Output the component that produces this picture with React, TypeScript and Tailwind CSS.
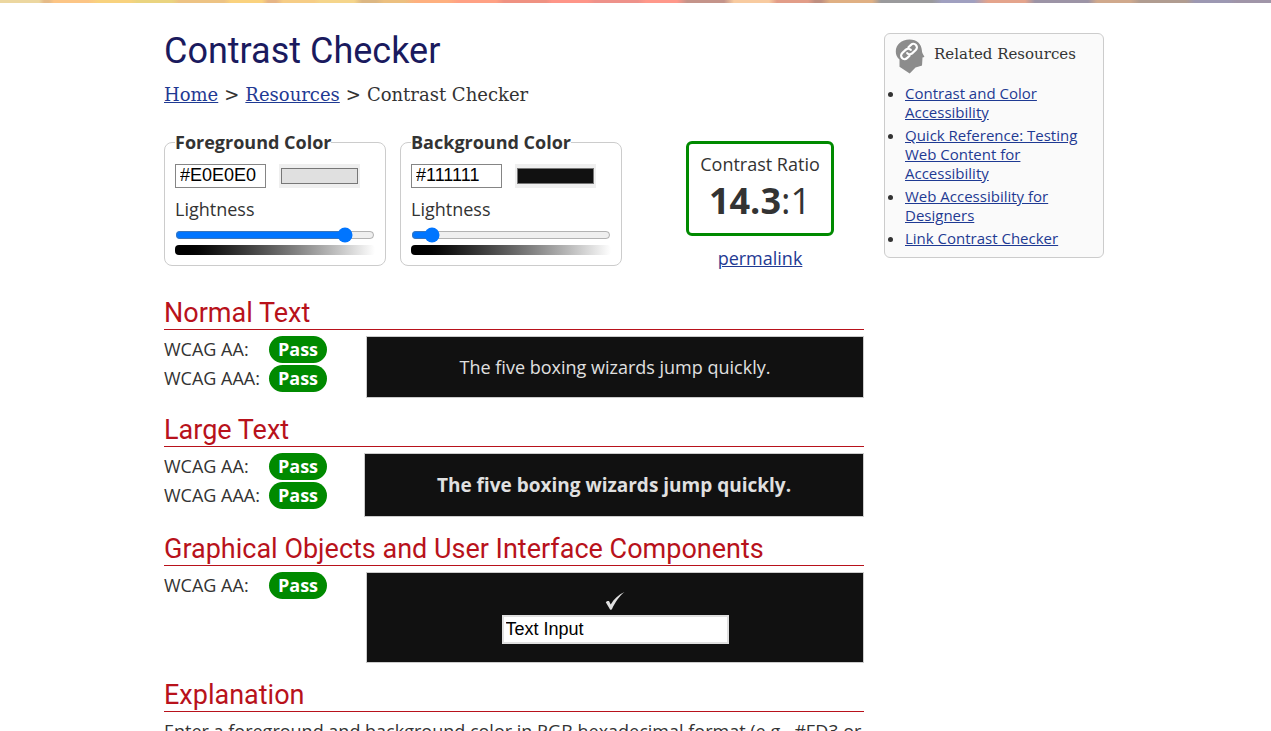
import { useState, type ReactNode } from 'react';

/* Colour stops of the decorative strip: start, end, colour (of 1271 units). */
const strip: [number, number, string][] = [
  [0, 39, '#ecd7a0'],
  [44, 49, '#e5bb88'],
  [54, 88, '#fcc585'],
  [98, 130, '#f8d27e'],
  [137, 172, '#ead480'],
  [179, 224, '#edc384'],
  [231, 262, '#fad27e'],
  [268, 276, '#e6b586'],
  [283, 314, '#f6cd86'],
  [320, 354, '#f5d58b'],
  [362, 376, '#dcb783'],
  [384, 404, '#ecc080'],
  [416, 448, '#feb07f'],
  [458, 496, '#ffa184'],
  [504, 546, '#ef9282'],
  [552, 588, '#fe9588'],
  [595, 638, '#ee928a'],
  [646, 677, '#ff988a'],
  [687, 724, '#c4948a'],
  [734, 769, '#f8cba0'],
  [777, 808, '#e29d88'],
  [815, 821, '#bf8f80'],
  [830, 872, '#e0b083'],
  [881, 932, '#9a9a9c'],
  [942, 974, '#a0a0c0'],
  [988, 1025, '#e4a48c'],
  [1035, 1088, '#9c94a6'],
  [1097, 1130, '#d0a98c'],
  [1140, 1186, '#b09c90'],
  [1195, 1228, '#9c98b2'],
  [1236, 1271, '#a095a8'],
];

const stripGradient = `linear-gradient(to right, ${strip
  .map(([from, to, color]) => `${color} ${(from / 1271) * 100}% ${(to / 1271) * 100}%`)
  .join(', ')})`;

const linkClass = 'text-[#1f3a93] underline';

function HeadLinkIcon() {
  return (
    <svg width="30" height="35" viewBox="0 0 30 35" aria-hidden="true" className="shrink-0">
      <path
        d="M14.500.5C22 .5 26.500 5 26.900 11.500c0 1.700.6 3 2.300 5.700.3.600 0 1-1.700 1.400l-.4 6.800c-.1 1-.7 1.500-1.600 1.700l-5 1.300-5.800 6L4.500 27.800v-7.300C1.800 18 .8 15.600.8 12.500.8 5.600 6.500.5 14.500.5z"
        fill="#8c8c8c"
      />
      <g
        transform="translate(14 12.500) rotate(-43)"
        fill="none"
        stroke="#fff"
        strokeWidth="2.200"
        strokeLinecap="round"
      >
        <path d="M-2.500 3.500H-6a3.500 3.500 0 0 1 0-7H-1a3.500 3.500 0 0 1 3.400 3.500" />
        <path d="M2.500-3.500H6a3.500 3.500 0 0 1 0 7H1a3.500 3.500 0 0 1-3.400-3.500" />
      </g>
    </svg>
  );
}

function ColorPanel({
  id,
  title,
  initial,
  lightness,
}: {
  id: string;
  title: string;
  initial: string;
  lightness: number;
}) {
  const [color, setColor] = useState(initial);
  const [light, setLight] = useState(lightness);
  const swatch = /^#[0-9a-f]{6}$/i.test(color) ? color.toLowerCase() : '#000000';
  return (
    <fieldset className="w-[222px] rounded-lg border border-[#ccc] px-2.5 pb-2.5">
      <legend className="font-bold leading-6">{title}</legend>
      <div className="mt-2.5 flex gap-[13px]">
        <input
          type="text"
          aria-label={`${title} value`}
          value={color}
          onChange={(e) => setColor(e.target.value)}
          className="h-6 w-[91px] border border-[#858585] bg-white px-1 pb-0.5 font-['Liberation_Sans',sans-serif] text-[18px] leading-5 text-black"
        />
        <input
          type="color"
          aria-label={`${title} picker`}
          value={swatch}
          onChange={(e) => setColor(e.target.value.toUpperCase())}
          className="h-6 w-[81px] bg-[#efefef]"
        />
      </div>
      <label htmlFor={id} className="mt-2 block leading-[27px]">
        Lightness
      </label>
      <input
        id={id}
        type="range"
        min={0}
        max={100}
        value={light}
        onChange={(e) => setLight(Number(e.target.value))}
        className="mt-1 block h-4 w-full"
      />
      <div className="mt-0.5 h-2.5 w-full rounded-[4px] bg-linear-to-r from-black to-white" />
    </fieldset>
  );
}

function SectionHeading({ children }: { children: ReactNode }) {
  return (
    <h2 className="mb-1.5 mt-[17px] border-b border-[#b8121b] font-['Roboto',sans-serif] text-[27px] font-normal leading-[31px] text-[#b8121b]">
      {children}
    </h2>
  );
}

function Results({ levels, children }: { levels: string[]; children: ReactNode }) {
  return (
    <div className="flex items-start justify-between">
      <dl className="flex flex-col gap-0.5">
        {levels.map((level) => (
          <div key={level} className="flex leading-[27px]">
            <dt className="w-[105px]">WCAG {level}:</dt>
            <dd className="rounded-full bg-[#008a00] px-[9px] font-bold text-white">Pass</dd>
          </div>
        ))}
      </dl>
      {children}
    </div>
  );
}

const related = [
  'Contrast and Color Accessibility',
  'Quick Reference: Testing Web Content for Accessibility',
  'Web Accessibility for Designers',
  'Link Contrast Checker',
];

export default function App() {
  return (
    <div className="h-screen overflow-hidden bg-white font-['Open_Sans',sans-serif] text-[18px] text-[#333]">
      <div className="h-[3px]" style={{ backgroundImage: stripGradient }} />
      <div className="mx-auto flex max-w-[943px] items-start gap-5 pt-[30px]">
        <main className="w-[700px]">
          <h1 className="font-['Roboto',sans-serif] text-[36px] font-normal leading-9 text-[#1a1a5e]">
            Contrast Checker
          </h1>
          <nav
            aria-label="Breadcrumb"
            className="mt-[13px] flex gap-1.5 font-['DejaVu_Serif',serif] text-[18px] leading-[26px]"
          >
            <a href="#home" className={linkClass}>Home</a>
            <span>&gt;</span>
            <a href="#resources" className={linkClass}>Resources</a>
            <span>&gt;</span>
            <span>Contrast Checker</span>
          </nav>

          <div className="mt-[22px] flex items-start">
            <div className="flex gap-3.5">
              <ColorPanel id="fg-lightness" title="Foreground Color" initial="#E0E0E0" lightness={88} />
              <ColorPanel id="bg-lightness" title="Background Color" initial="#111111" lightness={7} />
            </div>
            <div className="ml-16 mt-[11px] text-center">
              <div className="h-[95px] w-[148px] rounded-md border-3 border-[#008a00] pt-1.5">
                <div className="leading-7">Contrast Ratio</div>
                <div className="text-[36px] leading-[46px]">
                  <b className="font-bold">14.3</b>:1
                </div>
              </div>
              <a href="#permalink" className={`mt-2.5 inline-block leading-6 ${linkClass}`}>
                permalink
              </a>
            </div>
          </div>

          <div className="mt-[26px]">
            <SectionHeading>Normal Text</SectionHeading>
            <Results levels={['AA', 'AAA']}>
              <p className="w-[498px] border border-[#ccc] bg-[#111] text-center leading-[60px] text-[#e0e0e0]">
                The five boxing wizards jump quickly.
              </p>
            </Results>

            <SectionHeading>Large Text</SectionHeading>
            <Results levels={['AA', 'AAA']}>
              <p className="w-[500px] border border-[#ccc] bg-[#111] text-center text-[19px] font-bold leading-[62px] text-[#e0e0e0]">
                The five boxing wizards jump quickly.
              </p>
            </Results>

            <SectionHeading>Graphical Objects and User Interface Components</SectionHeading>
            <Results levels={['AA']}>
              <div className="flex h-[91px] w-[498px] flex-col items-center border border-[#ccc] bg-[#111] pt-[18px]">
                <svg width="20" height="19" viewBox="0 0 20 19" aria-hidden="true" className="mb-[5px] shrink-0">
                  <path
                    d="M.8 11.200C1.600 10 3 9.700 4 10l1.700 3.400C9 8 13.500 3.600 19.500 1 14.500 5 10.500 10.500 6.800 18.500l-1.600.2z"
                    fill="#e0e0e0"
                  />
                </svg>
                <input
                  type="text"
                  aria-label="Text Input"
                  defaultValue="Text Input"
                  className="h-[29px] w-[227px] shrink-0 border-2 border-[#e0e0e0] bg-white px-0.5 font-['Liberation_Sans',sans-serif] text-[18px] leading-6 text-black"
                />
              </div>
            </Results>

            <SectionHeading>Explanation</SectionHeading>
            <p className="leading-[27px]">
              Enter a foreground and background color in RGB hexadecimal format (e.g., #FD3 or
            </p>
          </div>
        </main>

        <aside className="w-[220px] rounded-md border border-[#ccc] bg-[#fafafa] px-2.5 pb-[9px] pt-[5px]">
          <h2 className="flex items-start gap-[9px] font-['DejaVu_Serif',serif] text-[15px] font-normal leading-[30px]">
            <HeadLinkIcon />
            Related Resources
          </h2>
          <ul className="mt-2.5 list-disc space-y-1 pl-2.5 text-[15px] leading-[19px]">
            {related.map((item) => (
              <li key={item}>
                <a href="#resource" className={linkClass}>{item}</a>
              </li>
            ))}
          </ul>
        </aside>
      </div>
    </div>
  );
}
